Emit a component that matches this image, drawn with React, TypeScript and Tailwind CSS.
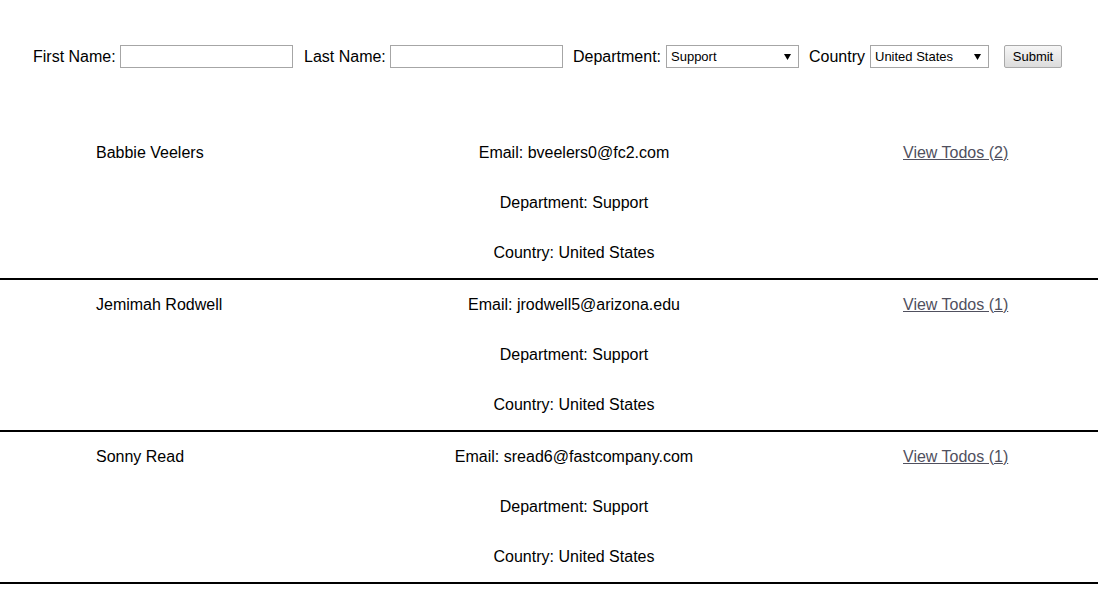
type Employee = {
  name: string;
  email: string;
  department: string;
  country: string;
  todos: number;
};

const employees: Employee[] = [
  { name: "Babbie Veelers", email: "bveelers0@fc2.com", department: "Support", country: "United States", todos: 2 },
  { name: "Jemimah Rodwell", email: "jrodwell5@arizona.edu", department: "Support", country: "United States", todos: 1 },
  { name: "Sonny Read", email: "sread6@fastcompany.com", department: "Support", country: "United States", todos: 1 },
];

function Arrow() {
  return (
    <svg aria-hidden="true" className="pointer-events-none absolute right-[8px] top-[9px] h-[6px] w-[7px]" viewBox="0 0 7 6">
      <path d="M0 0h7L3.5 6z" fill="#000" />
    </svg>
  );
}

function Select({ value, options, width }: { value: string; options: string[]; width: string }) {
  return (
    <div className={`relative h-[23px] ${width}`}>
      <select
        defaultValue={value}
        className="block h-[23px] w-full appearance-none rounded-none border border-[#a6a6a6] bg-white pl-[4px] text-[13px] leading-[21px] text-black outline-none"
      >
        {options.map((o) => (
          <option key={o}>{o}</option>
        ))}
      </select>
      <Arrow />
    </div>
  );
}

function SearchForm() {
  return (
    <form
      className="flex h-[23px] items-center pl-[33px] mt-[45px] text-[16px] leading-[23px] text-black"
      onSubmit={(e) => e.preventDefault()}
    >
      <label className="w-[87px] whitespace-nowrap">First Name:</label>
      <input type="text" className="block h-[23px] w-[173px] border border-[#a6a6a6] bg-white outline-none" />
      <label className="ml-[11px] w-[86px] whitespace-nowrap">Last Name:</label>
      <input type="text" className="block h-[23px] w-[173px] border border-[#a6a6a6] bg-white outline-none" />
      <label className="ml-[10px] w-[93px] whitespace-nowrap">Department:</label>
      <Select value="Support" options={["Support", "Sales", "Marketing"]} width="w-[133px]" />
      <label className="ml-[10px] w-[61px] whitespace-nowrap">Country</label>
      <Select value="United States" options={["United States", "Canada"]} width="w-[119px]" />
      <button
        type="submit"
        className="ml-[15px] block h-[23px] w-[58px] rounded-[2px] border border-[#a9a9a9] bg-gradient-to-b from-[#f6f6f6] to-[#dcdcdc] text-[13px] leading-[21px] text-black"
      >
        Submit
      </button>
    </form>
  );
}

function EmployeeRow({ employee }: { employee: Employee }) {
  return (
    <div className="grid grid-cols-[304px_348px_1fr] border-b-2 border-black pb-[15px] pl-[96px] pt-[15px] text-[16px] leading-[20px] text-black">
      <div>{employee.name}</div>
      <div className="flex flex-col gap-[30px] text-center">
        <p>Email: {employee.email}</p>
        <p>Department: {employee.department}</p>
        <p>Country: {employee.country}</p>
      </div>
      <div className="pl-[155px]">
        <a href="#" className="text-[#50505e] underline">
          View Todos ({employee.todos})
        </a>
      </div>
    </div>
  );
}

export default function App() {
  return (
    <div className="min-h-[608px] overflow-hidden bg-white font-['Liberation_Sans',Arial,sans-serif]">
      <SearchForm />
      <div className="mt-[60px]">
        {employees.map((e) => (
          <EmployeeRow key={e.email} employee={e} />
        ))}
      </div>
    </div>
  );
}
